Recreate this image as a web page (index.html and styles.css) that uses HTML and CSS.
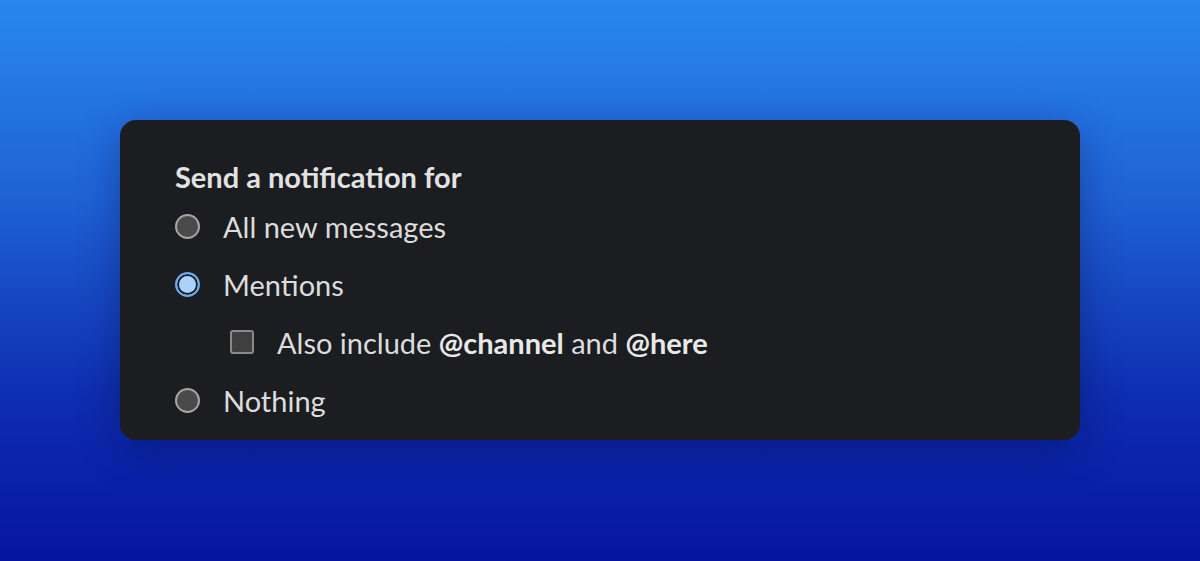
FILE: index.html
```html
<!DOCTYPE html>
<html lang="en">
<head>
    <meta charset="UTF-8">
    <meta name="viewport" content="width=device-width, initial-scale=1.0">
    <title>Notification preferences</title>
    <link rel="stylesheet" href="styles.css">
</head>
<body>
    <!-- notification settings panel -->
    <div class="panel">
        <h2 class="panel-title">Send a notification for</h2>

        <label class="option">
            <span class="radio"></span>
            <span class="option-text">All new messages</span>
        </label>

        <label class="option">
            <span class="radio checked"></span>
            <span class="option-text">Mentions</span>
        </label>

        <label class="option sub-option">
            <span class="checkbox"></span>
            <span class="option-text">Also include <b>@channel</b> and <b>@here</b></span>
        </label>

        <label class="option">
            <span class="radio"></span>
            <span class="option-text">Nothing</span>
        </label>
    </div>
</body>
</html>
```

FILE: styles.css
```css
/* page background */
html, body {
    height: 100%;
}

body {
    margin: 0;
    padding: 120px 120px 0;
    box-sizing: border-box;
    font-family: 'Lato', sans-serif;
    background: linear-gradient(180deg, #2887f0 0%, #1f62d6 35%, #0e2eb0 70%, #0614a0 100%);
}

/* panel */
.panel {
    background: #1b1d20;
    border-radius: 16px;
    padding: 37px 55px 22px;
    height: 320px;
    box-sizing: border-box;
    box-shadow: 0 10px 40px rgba(0, 10, 60, 0.35);
    color: #dcdcdc;
}

.panel-title {
    margin: 0;
    font-size: 29px;
    font-weight: 700;
    line-height: 40px;
    color: #e2e2e2;
}

/* rows */
.option {
    display: flex;
    align-items: center;
    height: 58px;
    gap: 23px;
    font-size: 29px;
}

.sub-option {
    padding-left: 55px;
}

.option-text b {
    font-weight: 700;
    color: #e8e8e8;
}

/* radio buttons */
.radio {
    width: 21px;
    height: 21px;
    border-radius: 50%;
    border: 2px solid #a5a5a5;
    background: #4a4a4a;
    flex-shrink: 0;
}

.radio.checked {
    border-color: #6aa8f0;
    background: #a9d2ff;
    box-shadow: inset 0 0 0 2px #1b1d20;
}

/* checkbox */
.checkbox {
    width: 20px;
    height: 20px;
    border-radius: 3px;
    border: 2px solid #8a8a8a;
    background: #3f3f3f;
    flex-shrink: 0;
}
```
